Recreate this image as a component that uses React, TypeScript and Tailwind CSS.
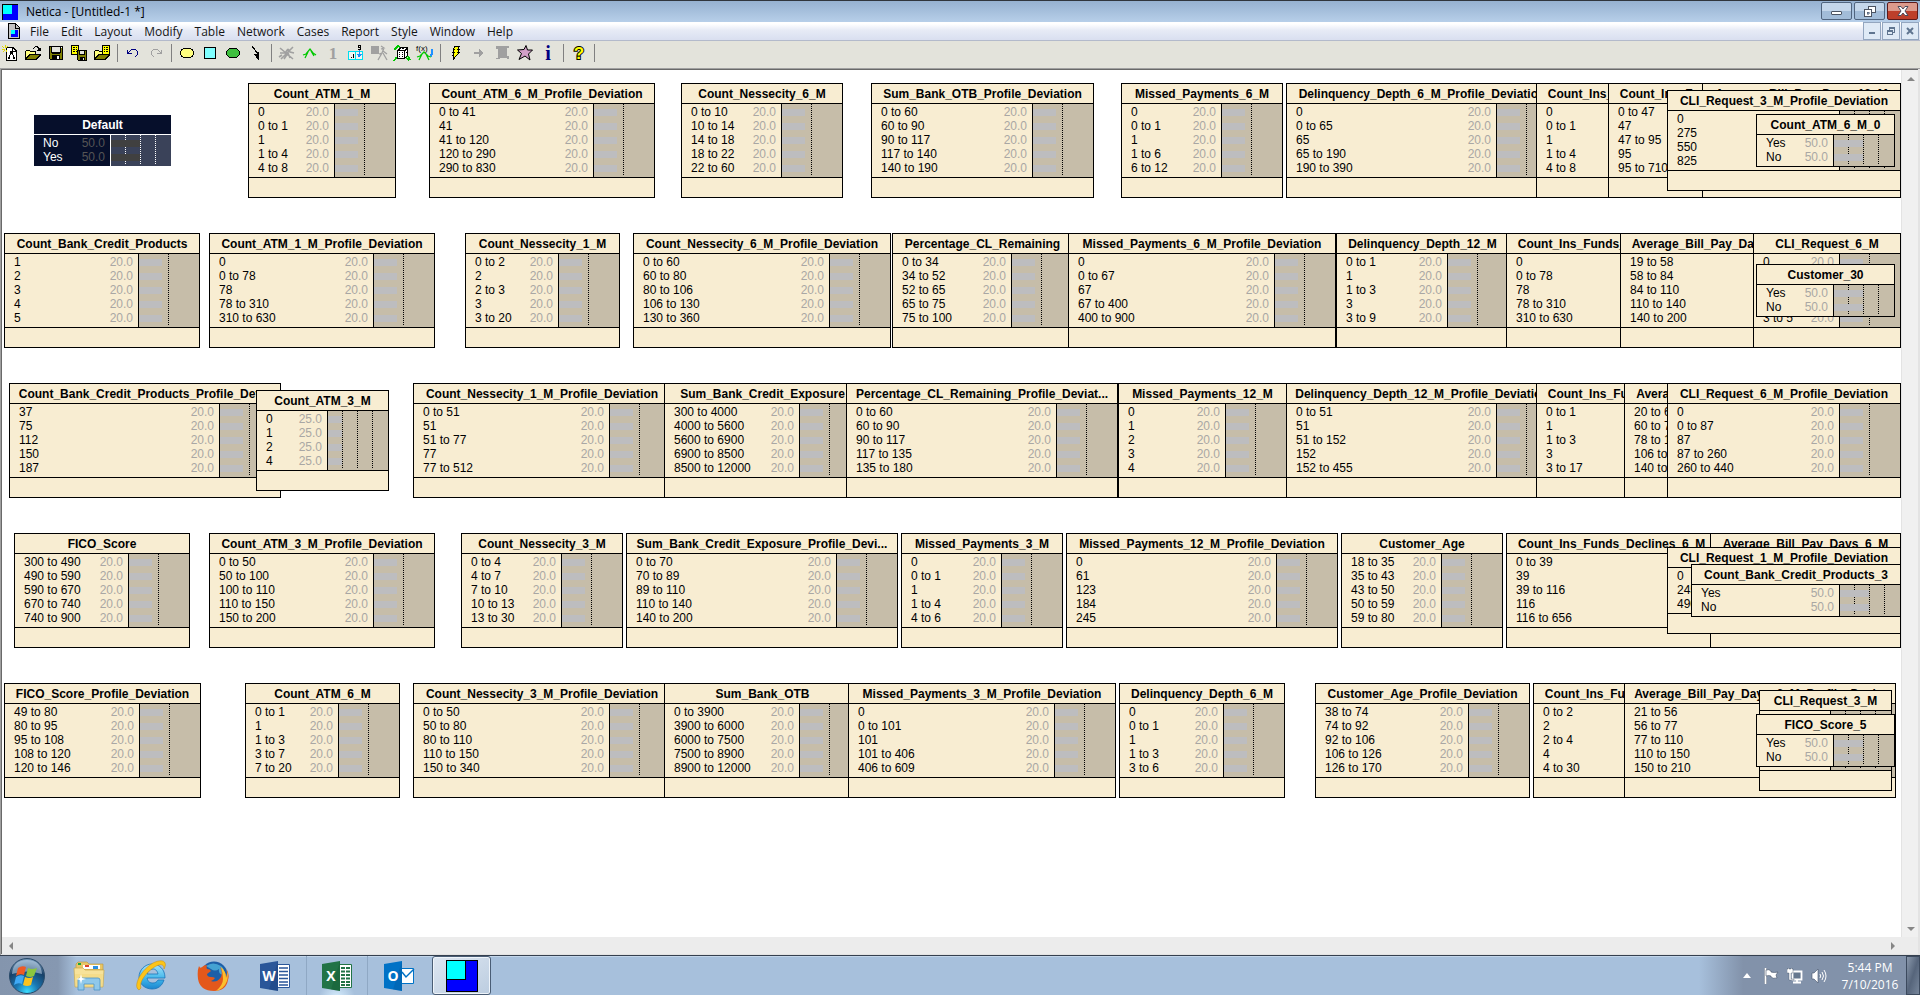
import type { ReactNode } from "react";

type BeliefNode = {
  title: string;
  x: number;
  y: number;
  w: number;
  states: string[];
  dark?: boolean;
  // The belief column lies under a neighbouring node.
  covered?: boolean;
};

const menus = [
  "File",
  "Edit",
  "Layout",
  "Modify",
  "Table",
  "Network",
  "Cases",
  "Report",
  "Style",
  "Window",
  "Help",
];

// Later nodes are painted over earlier ones.
const nodes: BeliefNode[] = [
  { title: "Default", x: 32, y: 45, w: 137, states: ["No", "Yes"], dark: true },

  { title: "Count_ATM_1_M", x: 246, y: 13, w: 148, states: ["0", "0 to 1", "1", "1 to 4", "4 to 8"] },
  { title: "Count_ATM_6_M_Profile_Deviation", x: 427, y: 13, w: 226, states: ["0 to 41", "41", "41 to 120", "120 to 290", "290 to 830"] },
  { title: "Count_Nessecity_6_M", x: 679, y: 13, w: 162, states: ["0 to 10", "10 to 14", "14 to 18", "18 to 22", "22 to 60"] },
  { title: "Sum_Bank_OTB_Profile_Deviation", x: 869, y: 13, w: 223, states: ["0 to 60", "60 to 90", "90 to 117", "117 to 140", "140 to 190"] },
  { title: "Missed_Payments_6_M", x: 1119, y: 13, w: 162, states: ["0", "0 to 1", "1", "1 to 6", "6 to 12"] },
  { title: "Delinquency_Depth_6_M_Profile_Deviation", x: 1284, y: 13, w: 272, states: ["0", "0 to 65", "65", "65 to 190", "190 to 390"] },
  { title: "Count_Ins_Funds_Declines_1_M", x: 1534, y: 13, w: 211, states: ["0", "0 to 1", "1", "1 to 4", "4 to 8"], covered: true },
  { title: "Count_Ins_Funds_Declines_6_M", x: 1606, y: 13, w: 211, states: ["0 to 47", "47", "47 to 95", "95", "95 to 710"], covered: true },
  { title: "Average_Bill_Pay_Days_12_M", x: 1700, y: 13, w: 199, states: ["", "", "", "", ""] },
  { title: "CLI_Request_3_M_Profile_Deviation", x: 1665, y: 20, w: 234, states: ["0", "275", "550", "825"], covered: true },
  { title: "Count_ATM_6_M_0", x: 1754, y: 44, w: 139, states: ["Yes", "No"] },

  { title: "Count_Bank_Credit_Products", x: 2, y: 163, w: 196, states: ["1", "2", "3", "4", "5"] },
  { title: "Count_ATM_1_M_Profile_Deviation", x: 207, y: 163, w: 226, states: ["0", "0 to 78", "78", "78 to 310", "310 to 630"] },
  { title: "Count_Nessecity_1_M", x: 463, y: 163, w: 155, states: ["0 to 2", "2", "2 to 3", "3", "3 to 20"] },
  { title: "Count_Nessecity_6_M_Profile_Deviation", x: 631, y: 163, w: 258, states: ["0 to 60", "60 to 80", "80 to 106", "106 to 130", "130 to 360"] },
  { title: "Percentage_CL_Remaining", x: 890, y: 163, w: 181, states: ["0 to 34", "34 to 52", "52 to 65", "65 to 75", "75 to 100"] },
  { title: "Missed_Payments_6_M_Profile_Deviation", x: 1066, y: 163, w: 268, states: ["0", "0 to 67", "67", "67 to 400", "400 to 900"] },
  { title: "Delinquency_Depth_12_M", x: 1334, y: 163, w: 173, states: ["0 to 1", "1", "1 to 3", "3", "3 to 9"] },
  { title: "Count_Ins_Funds_Declines_1_M", x: 1504, y: 163, w: 211, states: ["0", "0 to 78", "78", "78 to 310", "310 to 630"], covered: true },
  { title: "Average_Bill_Pay_Days_1_M_Profile_Devi...", x: 1618, y: 163, w: 275, states: ["19 to 58", "58 to 84", "84 to 110", "110 to 140", "140 to 200"], covered: true },
  { title: "CLI_Request_6_M", x: 1751, y: 163, w: 148, states: ["0", "", "", "", "3 to 5"] },
  { title: "Customer_30", x: 1754, y: 194, w: 139, states: ["Yes", "No"] },

  { title: "Count_Bank_Credit_Products_Profile_Dev...", x: 7, y: 313, w: 272, states: ["37", "75", "112", "150", "187"] },
  { title: "Count_ATM_3_M", x: 254, y: 320, w: 133, states: ["0", "1", "2", "4"] },
  { title: "Count_Nessecity_1_M_Profile_Deviation", x: 411, y: 313, w: 258, states: ["0 to 51", "51", "51 to 77", "77", "77 to 512"] },
  { title: "Sum_Bank_Credit_Exposure", x: 662, y: 313, w: 197, states: ["300 to 4000", "4000 to 5600", "5600 to 6900", "6900 to 8500", "8500 to 12000"] },
  { title: "Percentage_CL_Remaining_Profile_Deviat...", x: 844, y: 313, w: 272, states: ["0 to 60", "60 to 90", "90 to 117", "117 to 135", "135 to 180"] },
  { title: "Missed_Payments_12_M", x: 1116, y: 313, w: 169, states: ["0", "1", "2", "3", "4"] },
  { title: "Delinquency_Depth_12_M_Profile_Deviation", x: 1284, y: 313, w: 272, states: ["0 to 51", "51", "51 to 152", "152", "152 to 455"] },
  { title: "Count_Ins_Funds_Declines_3_M", x: 1534, y: 313, w: 211, states: ["0 to 1", "1", "1 to 3", "3", "3 to 17"], covered: true },
  { title: "Average_Bill_Pay_Days_3_M", x: 1622, y: 313, w: 190, states: ["20 to 60", "60 to 78", "78 to 106", "106 to 140", "140 to 200"], covered: true },
  { title: "CLI_Request_6_M_Profile_Deviation", x: 1665, y: 313, w: 234, states: ["0", "0 to 87", "87", "87 to 260", "260 to 440"] },

  { title: "FICO_Score", x: 12, y: 463, w: 176, states: ["300 to 490", "490 to 590", "590 to 670", "670 to 740", "740 to 900"] },
  { title: "Count_ATM_3_M_Profile_Deviation", x: 207, y: 463, w: 226, states: ["0 to 50", "50 to 100", "100 to 110", "110 to 150", "150 to 200"] },
  { title: "Count_Nessecity_3_M", x: 459, y: 463, w: 162, states: ["0 to 4", "4 to 7", "7 to 10", "10 to 13", "13 to 30"] },
  { title: "Sum_Bank_Credit_Exposure_Profile_Devi...", x: 624, y: 463, w: 272, states: ["0 to 70", "70 to 89", "89 to 110", "110 to 140", "140 to 200"] },
  { title: "Missed_Payments_3_M", x: 899, y: 463, w: 162, states: ["0", "0 to 1", "1", "1 to 4", "4 to 6"] },
  { title: "Missed_Payments_12_M_Profile_Deviation", x: 1064, y: 463, w: 272, states: ["0", "61", "123", "184", "245"] },
  { title: "Customer_Age", x: 1339, y: 463, w: 162, states: ["18 to 35", "35 to 43", "43 to 50", "50 to 59", "59 to 80"] },
  { title: "Count_Ins_Funds_Declines_6_M_Profile_...", x: 1504, y: 463, w: 272, states: ["0 to 39", "39", "39 to 116", "116", "116 to 656"], covered: true },
  { title: "Average_Bill_Pay_Days_6_M", x: 1708, y: 463, w: 191, states: ["", "", "", "", ""] },
  { title: "CLI_Request_1_M_Profile_Deviation", x: 1665, y: 477, w: 234, states: ["0", "245", "490"], covered: true },
  { title: "Count_Bank_Credit_Products_3", x: 1689, y: 494, w: 210, states: ["Yes", "No"] },

  { title: "FICO_Score_Profile_Deviation", x: 2, y: 613, w: 197, states: ["49 to 80", "80 to 95", "95 to 108", "108 to 120", "120 to 146"] },
  { title: "Count_ATM_6_M", x: 243, y: 613, w: 155, states: ["0 to 1", "1", "1 to 3", "3 to 7", "7 to 20"] },
  { title: "Count_Nessecity_3_M_Profile_Deviation", x: 411, y: 613, w: 258, states: ["0 to 50", "50 to 80", "80 to 110", "110 to 150", "150 to 340"] },
  { title: "Sum_Bank_OTB", x: 662, y: 613, w: 197, states: ["0 to 3900", "3900 to 6000", "6000 to 7500", "7500 to 8900", "8900 to 12000"] },
  { title: "Missed_Payments_3_M_Profile_Deviation", x: 846, y: 613, w: 268, states: ["0", "0 to 101", "101", "101 to 406", "406 to 609"] },
  { title: "Delinquency_Depth_6_M", x: 1117, y: 613, w: 166, states: ["0", "0 to 1", "1", "1 to 3", "3 to 6"] },
  { title: "Customer_Age_Profile_Deviation", x: 1313, y: 613, w: 215, states: ["38 to 74", "74 to 92", "92 to 106", "106 to 126", "126 to 170"] },
  { title: "Count_Ins_Funds_Declines_6_M", x: 1531, y: 613, w: 211, states: ["0 to 2", "2", "2 to 4", "4", "4 to 30"], covered: true },
  { title: "Average_Bill_Pay_Days_6_M_Profile_Devi...", x: 1622, y: 613, w: 272, states: ["21 to 56", "56 to 77", "77 to 110", "110 to 150", "150 to 210"], covered: true },
  { title: "CLI_Request_3_M", x: 1757, y: 620, w: 133, states: ["", "", "", ""] },
  { title: "FICO_Score_5", x: 1754, y: 644, w: 139, states: ["Yes", "No"] },
];

function BeliefBox({ node }: { node: BeliefNode }) {
  const { title, x, y, w, states, dark, covered } = node;
  const belief = 100 / states.length;
  // Five-state nodes are drawn on a 0-50 scale, the others on 0-100.
  const scale = states.length === 5 ? 50 : 100;
  const marks = scale === 50 ? [29] : [14, 29, 44];
  const line = dark ? "border-white" : "border-black";

  return (
    <section
      style={{ left: x, top: y, width: w }}
      className={[
        "absolute overflow-hidden font-['Liberation_Sans',Arial,sans-serif] text-[12px]",
        dark ? "bg-[#060f2b] text-white" : "border border-black bg-[#f8edd2] text-black",
      ].join(" ")}
    >
      <h2 className="flex h-[19px] justify-center leading-[21px] font-bold whitespace-nowrap">
        <span>{title}</span>
      </h2>
      <div className={`flex border-t ${line}`}>
        <ul className="flex-1 pt-px pr-[5px] pb-[2px] pl-[9px]">
          {states.map((state, index) => (
            <li key={index} className="flex h-[14px] justify-between leading-[14px] whitespace-nowrap">
              <span>{state}</span>
              {state && !covered && (
                <span className={dark ? "text-[#555555]" : "text-[#a9a7a4]"}>
                  {belief.toFixed(1)}
                </span>
              )}
            </li>
          ))}
        </ul>
        <div
          className={[
            "relative w-[61px] border-l pt-px",
            line,
            dark ? "bg-[#3a4259]" : "bg-[#c6bda9]",
          ].join(" ")}
        >
          {marks.map((mark) => (
            <i
              key={mark}
              style={{ left: mark }}
              className={[
                "absolute top-0 bottom-[2px] w-px",
                dark
                  ? "bg-[repeating-linear-gradient(to_bottom,#fff_0_1px,transparent_1px_2px)]"
                  : "bg-[repeating-linear-gradient(to_bottom,#000_0_1px,transparent_1px_2px)]",
              ].join(" ")}
            />
          ))}
          {states.map((_, index) => (
            <div key={index} className="relative flex h-[14px] items-center">
              <div
                style={{ width: Math.floor((belief / scale) * 60) - 1 }}
                className={dark ? "h-[7px] bg-[#404040]" : "h-[7px] bg-[#bdbdbf]"}
              />
            </div>
          ))}
        </div>
      </div>
      {states.length > 2 && <div className="h-5 border-t border-black" />}
    </section>
  );
}

function Logo({ className }: { className: string }) {
  return (
    <svg viewBox="0 0 32 32" className={className} shapeRendering="crispEdges" aria-hidden="true">
      <rect width="32" height="32" fill="#000" />
      <rect x="1" y="1" width="30" height="30" fill="#0000ff" />
      <rect x="1" y="1" width="19" height="19" fill="#000" />
      <rect x="1" y="1" width="18" height="18" fill="#00ffff" />
    </svg>
  );
}

function Icon({ children }: { children: ReactNode }) {
  return (
    <svg viewBox="0 0 16 16" className="h-4 w-4 overflow-visible" shapeRendering="crispEdges" aria-hidden="true">
      {children}
    </svg>
  );
}

const folder = (
  <>
    <path d="M0 15V6h1V5h4v1h6v3h5v1l-4 5H0z" fill="#000" />
    <path d="M1 13V6h4v1h5v2H4l-3 4z" fill="#ffff80" />
    <path d="M1 14l4-4h9l-3 4z" fill="#808000" />
  </>
);

type Tool = { name: string; icon: ReactNode } | null;

const tools: Tool[] = [
  {
    name: "New network",
    icon: (
      <>
        <path d="M4 2h7l4 4v10H4z" fill="#000" />
        <path d="M5 3h5v4h4v8H5z" fill="#fff" />
        <path d="M11 4l2 2h-2z" fill="#fff" />
        <path d="M8 6h3v3H8zM6 12h2v2H6zM11 12h2v2h-2zM8 9h1v1H8zM7 10h1v2H7zM10 9h1v1h-1zM11 10h1v2h-1z" fill="#000" />
        <path d="M3 0v3M0 1l2 2M6 1L4 3M0 4h3M1 7l2-2M4 5v2" stroke="#e0d800" strokeWidth="1" fill="none" />
      </>
    ),
  },
  {
    name: "Open",
    icon: (
      <>
        {folder}
        <path d="M8 3h1V2h1V1h3v1h1v1h2v3h-4V5h1V3h-1V2h-2v1H9v1H8z" fill="#000" />
      </>
    ),
  },
  {
    name: "Save",
    icon: (
      <>
        <path d="M1 1h14v14H2l-1-1z" fill="#000" />
        <path d="M2 2h1v6h1v1h8V8h1V3h1v11h-2v-4H4v4H2z" fill="#808000" />
        <path d="M4 2h8v5H4z" fill="#e3e3db" />
        <path d="M9 11h2v3H9zM13 2h1v1h-1z" fill="#fff" />
      </>
    ),
  },
  {
    name: "Save cases",
    icon: (
      <>
        <path d="M0 0h8v10H0z" fill="#000" />
        <path d="M1 1h6v8H1z" fill="#ffff00" />
        <path d="M2 2h2v1H2zM5 2h1v1H5zM2 4h2v1H2zM5 4h1v1H5zM2 6h2v1H2zM5 6h1v1H5z" fill="#000" />
        <path d="M6 5h10v11H7l-1-1z" fill="#000" />
        <path d="M7 6h1v4h6V6h1v9h-1v-3H9v3H7z" fill="#808000" />
        <path d="M9 6h4v3H9zM12 13h1v2h-1z" fill="#e3e3db" />
      </>
    ),
  },
  {
    name: "Open cases",
    icon: (
      <>
        {folder}
        <path d="M8 0h8v10H8z" fill="#000" />
        <path d="M9 1h6v8H9z" fill="#ffff00" />
        <path d="M10 2h1v1h-1zM12 2h2v1h-2zM10 4h1v1h-1zM12 4h2v1h-2zM10 6h1v1h-1zM12 6h2v1h-2z" fill="#000" />
      </>
    ),
  },
  null,
  {
    name: "Undo",
    icon: <path d="M2 5h1v2h1V6h1V5h1V4h5v1h1v1h1v4h-1v1h-1v1h-1v-1h1v-1h1V6h-1V5H6v1H5v1H4v1h3v1H2z" fill="#000080" />,
  },
  {
    name: "Redo",
    icon: <path d="M14 5h-1v2h-1V6h-1V5h-1V4H5v1H4v1H3v4h1v1h1v1h1v-1H5v-1H4V6h1V5h5v1h1v1h1v1H9v1h5z" fill="#a0a0a0" />,
  },
  null,
  {
    name: "Nature node",
    icon: <path d="M5 3.5h6l2 1 1.500 2v3l-1.500 2-2 1H5l-2-1-1.500-2v-3l1.500-2z" fill="#ffff80" stroke="#000" />,
  },
  { name: "Decision node", icon: <rect x="2.5" y="2.5" width="11" height="11" fill="#80ffff" stroke="#000" /> },
  { name: "Utility node", icon: <path d="M4.5 3.5h7l3 3v3l-3 3h-7l-3-3v-3z" fill="#3fbf3f" stroke="#000" /> },
  {
    name: "Link",
    icon: (
      <>
        <path d="M4 1l6 8" stroke="#000" strokeWidth="1.4" />
        <path d="M6 9h3l2-3v9h-1z" fill="#000" />
      </>
    ),
  },
  null,
  {
    name: "Uncompile",
    icon: (
      <path
        d="M1 3l13 11M14 2L2 14M1 8h5l3-4M5 14l4-6 2 5M9 4l2 3 4 1M0 12l3-2"
        stroke="#a0a0a0"
        strokeWidth="1.6"
        fill="none"
        shapeRendering="auto"
      />
    ),
  },
  {
    name: "Compile",
    icon: (
      <path
        d="M1 10l3-1 4-5 3 4 3 2M6 7L3 13M9 6l3 5"
        stroke="#00c800"
        strokeWidth="1.3"
        fill="none"
        shapeRendering="auto"
      />
    ),
  },
  {
    name: "Most probable",
    icon: (
      <text x="8" y="14" textAnchor="middle" fontSize="17" fontWeight="700" fontFamily="Liberation Serif" fill="#a0a0a0">
        1
      </text>
    ),
  },
  {
    name: "Enter finding",
    icon: (
      <>
        <path d="M.5 6.5h14v8H.5zM7.5 6.5v8" stroke="#00e0f0" fill="#f4f4f0" />
        <path d="M3 12h1v1H3zM5 9h1v4H5z" fill="#000" />
        <path d="M10 0h3v5h-3V4h2V3h-2zM11 1v1h1V1z" fill="#000" />
        <path d="M11 5h1v4h2l-3 4-2-4h2z" fill="#1e90ff" />
      </>
    ),
  },
  {
    name: "Absorb node",
    icon: (
      <>
        <rect x="0" y="1" width="8" height="8" fill="#a0a0a0" />
        <path
          d="M10 1l3 2-3 1M13 3l-2 5-3 1M11 8l-4 7M12 8l4 7M12 6l4 3"
          stroke="#a0a0a0"
          strokeWidth="1.3"
          fill="none"
          shapeRendering="auto"
        />
      </>
    ),
  },
  {
    name: "Random case",
    icon: (
      <>
        <path d="M0 5l4-4 2 1M14 11l2 4M4 11l-4 5M12 13l3 2M3 13l-2 0" stroke="#00c800" strokeWidth="1.5" fill="none" />
        <path d="M3 5l3-3h8v8l-3 4H3z" fill="#000" />
        <path d="M4 6h6v7H4zM7 3h5l-2 2H5zM11 6l2-2v6l-2 2z" fill="#fff" />
        <path d="M5 7h1v1H5zM8 7h1v1H8zM5 9h1v1H5zM8 9h1v1H8zM5 11h1v1H5zM8 11h1v1H8zM8 3h2v1H8zM12 7h1v1h-1z" fill="#000" />
      </>
    ),
  },
  {
    name: "Equation to table",
    icon: (
      <>
        <path
          d="M0 12l3-1 4-4 4 4 3 1M5 9l-3 6M9 9l3 6"
          stroke="#00c800"
          strokeWidth="1.3"
          fill="none"
          shapeRendering="auto"
        />
        <text x="-1" y="6" fontSize="8" fontFamily="Liberation Sans" fill="#000">
          f(x)
        </text>
        <path d="M14 4h2v6h-1v2h-1l-1-3h1z" fill="#1e90ff" />
      </>
    ),
  },
  null,
  {
    name: "Update",
    icon: (
      <path
        d="M6.500 1.500h5l-2 3h2l-2 3h2l-4 4-2 3v-4h-1l2-3h-2l2-3h-1z"
        fill="#ffff00"
        stroke="#000"
      />
    ),
  },
  { name: "Next", icon: <path d="M3 7h5V4l5 4-5 4V9H3z" fill="#a0a0a0" /> },
  {
    name: "Script",
    icon: <path d="M2 1h13v2h-2v8h2v3h-2v-1H6v1H2v-1h2V4H2z" fill="#a0a0a0" />,
  },
  {
    name: "Star",
    icon: (
      <path
        d="M9 .5l1.500 4.500 5 0-4 4 1.500 6-5-4-6 3.500 2.500-6-4-3.500 6.500-.5z"
        fill="#d3a0c8"
        stroke="#000"
        shapeRendering="auto"
      />
    ),
  },
  {
    name: "Information",
    icon: (
      <text x="8" y="15" textAnchor="middle" fontSize="20" fontWeight="700" fontFamily="Liberation Serif" fill="#000080">
        i
      </text>
    ),
  },
  null,
  {
    name: "Help",
    icon: (
      <text
        x="8"
        y="14"
        textAnchor="middle"
        fontSize="17"
        fontWeight="700"
        fontFamily="Liberation Sans"
        fill="#ffff00"
        stroke="#000"
        strokeWidth="2"
        paintOrder="stroke"
      >
        ?
      </text>
    ),
  },
  null,
];

function TitleBar() {
  const frame = "flex h-[18px] w-[31px] items-center justify-center rounded-[2px] border";

  return (
    <header className="flex h-[22px] shrink-0 items-center border-t border-[#30353c] bg-linear-to-b from-[#96b1d0] to-[#b7cfe9] pl-[2px] text-[12px] text-black">
      <Logo className="h-4 w-4" />
      <h1 className="pl-2">Netica - [Untitled-1 *]</h1>
      <div className="ml-auto flex gap-[2px] self-start pt-px pr-[2px]">
        <button type="button" aria-label="Minimize" className={`${frame} border-[#50647e] bg-linear-to-b from-[#c4d6ea] from-50% to-[#a2bcd8] to-50%`}>
          <span className="mt-1 h-1 w-[11px] rounded-[1px] border border-[#4b5361] bg-white" />
        </button>
        <button type="button" aria-label="Restore" className={`${frame} border-[#50647e] bg-linear-to-b from-[#c4d6ea] from-50% to-[#a2bcd8] to-50%`}>
          <svg viewBox="0 0 12 11" className="h-[11px] w-3" shapeRendering="crispEdges" aria-hidden="true">
            <path d="M4.500 .5h7v6h-7z" fill="#fff" stroke="#4b5361" />
            <path d="M.5 3.500h7v7h-7z" fill="#fff" stroke="#4b5361" />
            <path d="M3 6h2v2H3z" fill="#7d93b0" stroke="#4b5361" strokeWidth=".5" />
          </svg>
        </button>
        <button type="button" aria-label="Close" className={`${frame} border-[#5c1a1a] bg-linear-to-b from-[#dc9a8c] from-50% to-[#bd3f2a] to-50%`}>
          <svg viewBox="0 0 12 10" className="h-[10px] w-3" aria-hidden="true">
            <path d="M1 .5h3l2 2.500 2-2.500h3L8 5l3 4.500H8L6 7 4 9.500H1L4 5z" fill="#fff" stroke="#4b4b5a" />
          </svg>
        </button>
      </div>
    </header>
  );
}

function MenuBar() {
  const frame = "flex h-[18px] w-[18px] items-center justify-center border border-[#93a6bf] bg-[#dfeaf6]";

  return (
    <nav aria-label="Menu" className="flex h-[19px] shrink-0 items-center border-b border-[#b3bacb] bg-linear-to-b from-white from-10% via-[#e7ebf6] via-45% to-[#d9dff0] pl-2 text-[12px] text-[#151515]">
      <svg viewBox="0 0 12 16" className="mr-1 h-4 w-3" shapeRendering="crispEdges" aria-hidden="true">
        <path d="M.5 .5h7l4 4v11H.5z" fill="#c4c4c4" stroke="#000" />
        <path d="M7 1v4h4" fill="none" stroke="#000" />
        <path d="M3 7h7v7H3z" fill="#0000ff" />
        <path d="M3 7h4v4H3z" fill="#00ffff" />
      </svg>
      {menus.map((menu) => (
        <button key={menu} type="button" className="px-[6px] pt-[2px]">
          {menu}
        </button>
      ))}
      <div className="ml-auto flex gap-px pr-px">
        <button type="button" aria-label="Minimize document" className={frame}>
          <span className="mt-1 h-[2px] w-[6px] bg-[#5f7590]" />
        </button>
        <button type="button" aria-label="Restore document" className={frame}>
          <svg viewBox="0 0 8 8" className="h-2 w-2" shapeRendering="crispEdges" aria-hidden="true">
            <path d="M2 0h6v6H6V5h1V2H3v1H2zM0 3h6v5H0zM1 5v2h4V5z" fill="#5f7590" fillRule="evenodd" />
          </svg>
        </button>
        <button type="button" aria-label="Close document" className={frame}>
          <svg viewBox="0 0 8 8" className="h-2 w-2" aria-hidden="true">
            <path d="M1 1l6 6M7 1L1 7" stroke="#5f7590" strokeWidth="2" />
          </svg>
        </button>
      </div>
    </nav>
  );
}

function Toolbar() {
  return (
    <div role="toolbar" aria-label="Tools" className="flex h-[27px] shrink-0 items-center gap-[7px] bg-[#e3e3db] pb-1 pl-[2px]">
      {tools.map((tool, index) =>
        tool ? (
          <button key={tool.name} type="button" aria-label={tool.name}>
            <Icon>{tool.icon}</Icon>
          </button>
        ) : (
          <span key={index} className="h-[18px] w-px bg-[#808080]" />
        )
      )}
    </div>
  );
}

function ScrollArrow({ d, label }: { d: string; label: string }) {
  return (
    <button type="button" aria-label={label} className="flex h-[17px] w-[17px] items-center justify-center">
      <svg viewBox="0 0 8 8" className="h-2 w-2" aria-hidden="true">
        <path d={d} fill="#868686" />
      </svg>
    </button>
  );
}

function Workspace() {
  return (
    <main className="flex min-h-0 flex-1 flex-col border-t border-l border-[#a0a0a0] bg-[#e3e3e3] pr-[2px] pb-px">
      <div className="flex min-h-0 flex-1 border-t border-l border-[#696969]">
        <div className="relative flex-1 overflow-hidden bg-white">
          {nodes.map((node, index) => (
            <BeliefBox key={index} node={node} />
          ))}
        </div>
        <div className="flex w-[17px] flex-col justify-between border-l border-[#e3e3e3] bg-[#f0f0f0]">
          <ScrollArrow d="M4 2l4 4H0z" label="Scroll up" />
          <ScrollArrow d="M4 6L0 2h8z" label="Scroll down" />
        </div>
      </div>
      <div className="flex h-[17px] shrink-0 justify-between border-l border-[#696969] bg-[#ececec] pr-[17px]">
        <ScrollArrow d="M2 4l4-4v8z" label="Scroll left" />
        <ScrollArrow d="M6 4L2 0v8z" label="Scroll right" />
      </div>
    </main>
  );
}

function OfficeIcon({ letter, color, dark, children }: { letter: string; color: string; dark: string; children: ReactNode }) {
  return (
    <svg viewBox="0 0 32 32" className="h-8 w-8" aria-hidden="true">
      {children}
      <path d="M1 4l18-3v30L1 28z" fill={color} />
      <path d="M19 1v30l-9-1.500z" fill={dark} opacity=".25" />
      <text x="10" y="21" textAnchor="middle" fontSize="14" fontWeight="700" fontFamily="Open Sans" fill="#fff">
        {letter}
      </text>
    </svg>
  );
}

const apps = [
  {
    name: "File Explorer",
    icon: (
      <svg viewBox="0 0 32 32" className="h-8 w-8" aria-hidden="true">
        <path d="M3 4l2-2h9l2 2h14v6H3z" fill="#e9c768" stroke="#b8933a" strokeWidth=".6" />
        <path d="M5 3h3v2H5z" fill="#19a63a" />
        <path d="M10 5h17v4H10z" fill="#fff" />
        <path d="M12 5h4v2h-4z" fill="#d9432f" />
        <path d="M20 6h5v3h-5z" fill="#2b8fe0" />
        <path d="M1 8h9l2 2h19l-1 17H2z" fill="#f7e29a" stroke="#c9a94f" strokeWidth=".7" />
        <path d="M2 14h28l-1 12H3z" fill="#f3d87e" opacity=".6" />
        <path d="M5 30V20q0-2 2-2h18q2 0 2 2v10h-6v-6H11v6z" fill="#8fc8ea" stroke="#4d93c4" strokeWidth=".8" />
        <path d="M8 14l1 4 4 1-4 1-1 4-1-4-4-1 4-1z" fill="#fff" />
      </svg>
    ),
  },
  {
    name: "Internet Explorer",
    icon: (
      <svg viewBox="0 0 32 32" className="h-8 w-8" aria-hidden="true">
        <defs>
          <linearGradient id="ie" x1="0" y1="0" x2="0" y2="1">
            <stop offset="0" stopColor="#a5e4fb" />
            <stop offset=".6" stopColor="#3fb5ea" />
            <stop offset="1" stopColor="#1c86cf" />
          </linearGradient>
        </defs>
        <path
          d="M17 4c7 0 13 5 13 14H12c1 4 3 5 6 5 2 0 4-1 5-3h6c-2 6-6 9-12 9C10 29 4 24 4 17S10 4 17 4zm-5 10h11c-1-4-3-5-5-5-3 0-5 2-6 5z"
          fill="url(#ie)"
          stroke="#1a74b8"
          strokeWidth=".8"
          fillRule="evenodd"
        />
        <path d="M4 30C-3 26 7 9 18 3c6-3 11-3 12 0 1 2 0 4-1 6 0-3-1-5-5-4C16 7 3 21 6 28z" fill="#fcc419" stroke="#c98a0a" strokeWidth=".5" />
      </svg>
    ),
  },
  {
    name: "Firefox",
    icon: (
      <svg viewBox="0 0 32 32" className="h-8 w-8" aria-hidden="true">
        <circle cx="17" cy="15" r="13.500" fill="#1d5fa8" />
        <path d="M9 6q7-5 15 0 5 4 2 9-5-1-4-6-4 3-8 0z" fill="#4fb3dc" opacity=".8" />
        <path
          d="M2 6q1 3 3 1 2-2 5-2-1 2 0 4 3 0 4 2l-4 3q0 3 4 3 3 0 4 1-1 2-4 3 6 2 10-4 2-5-1-10 5 4 7 10 1-5-1-9 4 6 2 12-2 11-14 11Q3 31 1 19 0 11 2 6z"
          fill="#e4581b"
        />
        <path d="M24 7q5 4 5 11 2-5 0-9 3 6 1 12-3 8-11 10 7-6 7-12 0-6-2-12z" fill="#fbc02d" />
      </svg>
    ),
  },
  {
    name: "Word",
    icon: (
      <OfficeIcon letter="W" color="#2a5699" dark="#102f66">
        <path d="M18 4.500h12.500v23H18z" fill="#fff" stroke="#2a5699" />
        <path d="M20 8h9M20 11.500h9M20 15h9M20 18.500h9M20 22h9M20 25h9" stroke="#2a5699" strokeWidth="1.300" />
      </OfficeIcon>
    ),
  },
  {
    name: "Excel",
    icon: (
      <OfficeIcon letter="X" color="#217346" dark="#0c4a28">
        <path d="M18 4.500h12.500v23H18z" fill="#fff" stroke="#217346" />
        <path d="M20 8h4M25 8h4M20 11.500h4M25 11.500h4M20 15h4M25 15h4M20 18.500h4M25 18.500h4M20 22h4M25 22h4M20 25h4M25 25h4" stroke="#217346" strokeWidth="2" />
      </OfficeIcon>
    ),
  },
  {
    name: "Outlook",
    icon: (
      <OfficeIcon letter="O" color="#0072c6" dark="#004a8c">
        <path d="M17 8.500h13.500v15H17z" fill="#fff" stroke="#0072c6" />
        <path d="M19 12l4 5 8-8" fill="none" stroke="#0072c6" strokeWidth="1.500" />
      </OfficeIcon>
    ),
  },
];

function StartOrb() {
  return (
    <svg viewBox="0 0 38 38" className="h-[38px] w-[38px]" aria-hidden="true">
      <defs>
        <radialGradient id="orb" cx=".5" cy=".95" r=".9">
          <stop offset="0" stopColor="#39dcff" />
          <stop offset=".35" stopColor="#1a78b4" />
          <stop offset=".75" stopColor="#173f66" />
          <stop offset="1" stopColor="#6f93b4" />
        </radialGradient>
      </defs>
      <circle cx="19" cy="19" r="17.500" fill="url(#orb)" stroke="#294a69" />
      <path d="M4 17Q5 3 19 3t15 14Q19 12 4 17z" fill="#c6dbec" opacity=".55" />
      <path d="M10 11q4-3 8-1l-2 8q-4-2-8 1z" fill="#ee5a24" />
      <path d="M20 11q4 2 9 0l-3 8q-4 2-8 0z" fill="#8cc63f" />
      <path d="M8 20q4-3 8-1l-2 8q-4-2-8 1z" fill="#3fa9f5" />
      <path d="M17 20q4 2 8 0l-2 8q-4 2-8 0z" fill="#fcc31e" />
    </svg>
  );
}

function Taskbar() {
  return (
    <footer className="flex h-10 shrink-0 items-center border-t border-[#35404f] bg-[#a7c0dc] text-[12px] shadow-[inset_0_1px_0_#c3d6ea]">
      <div className="flex h-full w-[58px] items-center bg-linear-to-r from-[#8495ad] to-[#8698b1] pl-2">
        <button type="button" aria-label="Start">
          <StartOrb />
        </button>
      </div>
      <div className="flex h-full items-center bg-linear-to-r from-[#8698b1] to-transparent to-5%">
        {apps.map((app) => (
          <button
            key={app.name}
            type="button"
            aria-label={app.name}
            className={[
              "flex h-full w-[62px] items-center justify-center",
              app.name === "Excel"
                ? "border-x border-[#8fa8c4] bg-[radial-gradient(circle_at_50%_110%,#d8efff_0,transparent_35%)]"
                : "",
            ].join(" ")}
          >
            {app.icon}
          </button>
        ))}
      </div>
      <button
        type="button"
        aria-label="Netica"
        className="ml-[2px] flex h-full w-[59px] items-center justify-center rounded-[3px] border border-[#4a5d75] bg-linear-to-br from-[#dde6f1] to-[#bccde0] shadow-[inset_0_0_0_1px_#eef4fa]"
      >
        <Logo className="h-8 w-8" />
      </button>
      <div className="ml-auto flex h-full items-center bg-linear-to-r from-transparent to-[#8292aa] to-20% pl-10 text-white">
        <button type="button" aria-label="Show hidden icons" className="flex h-4 w-4 items-center justify-center">
          <svg viewBox="0 0 8 5" className="h-[5px] w-2" aria-hidden="true">
            <path d="M4 0l4 5H0z" fill="#fff" />
          </svg>
        </button>
        <div className="flex gap-2 pr-2 pl-2">
          <svg viewBox="0 0 16 16" className="h-4 w-4" aria-hidden="true">
            <path d="M2.500 0v16" stroke="#455268" strokeWidth="3" />
            <path d="M2.500 0v16" stroke="#fff" strokeWidth="2" />
            <path d="M3 2q3-1 5 1v1q3 1 7 0l-2 3 1 3q-4 1-6-1V8Q6 7 3 8z" fill="#fff" stroke="#455268" strokeWidth=".6" />
          </svg>
          <svg viewBox="0 0 16 16" className="h-4 w-4" aria-hidden="true">
            <path d="M5.500 3.500h9v8h-9zM10 12v2M6 14.500h8" fill="#66788f" stroke="#fff" strokeWidth="1.800" />
            <path d="M0 1h1V0h1v1h2V0h1v1h1v4H4v6h3v1H2V5H0z" fill="#fff" stroke="#455268" strokeWidth=".4" />
          </svg>
          <svg viewBox="0 0 16 16" className="h-4 w-4" aria-hidden="true">
            <path d="M1 5h2l4-4v14l-4-4H1z" fill="#fff" stroke="#455268" strokeWidth=".6" />
            <path d="M9 6q1.500 2 0 4M11 4q3 4 0 8M13 2q4 6 0 12" fill="none" stroke="#fff" />
          </svg>
        </div>
        <div className="flex w-[70px] flex-col items-center pt-px leading-[17px]">
          <span>5:44 PM</span>
          <span>7/10/2016</span>
        </div>
        <button
          type="button"
          aria-label="Show desktop"
          className="ml-px h-full w-[14px] border border-[#3c4a5e] bg-linear-to-br from-[#8b99ac] via-[#56657b] to-[#77869b]"
        />
      </div>
    </footer>
  );
}

function App() {
  return (
    <div className="flex h-screen flex-col overflow-hidden bg-white font-['Open_Sans','Noto_Sans',sans-serif]">
      <TitleBar />
      <MenuBar />
      <Toolbar />
      <Workspace />
      <Taskbar />
    </div>
  );
}

export default App;
